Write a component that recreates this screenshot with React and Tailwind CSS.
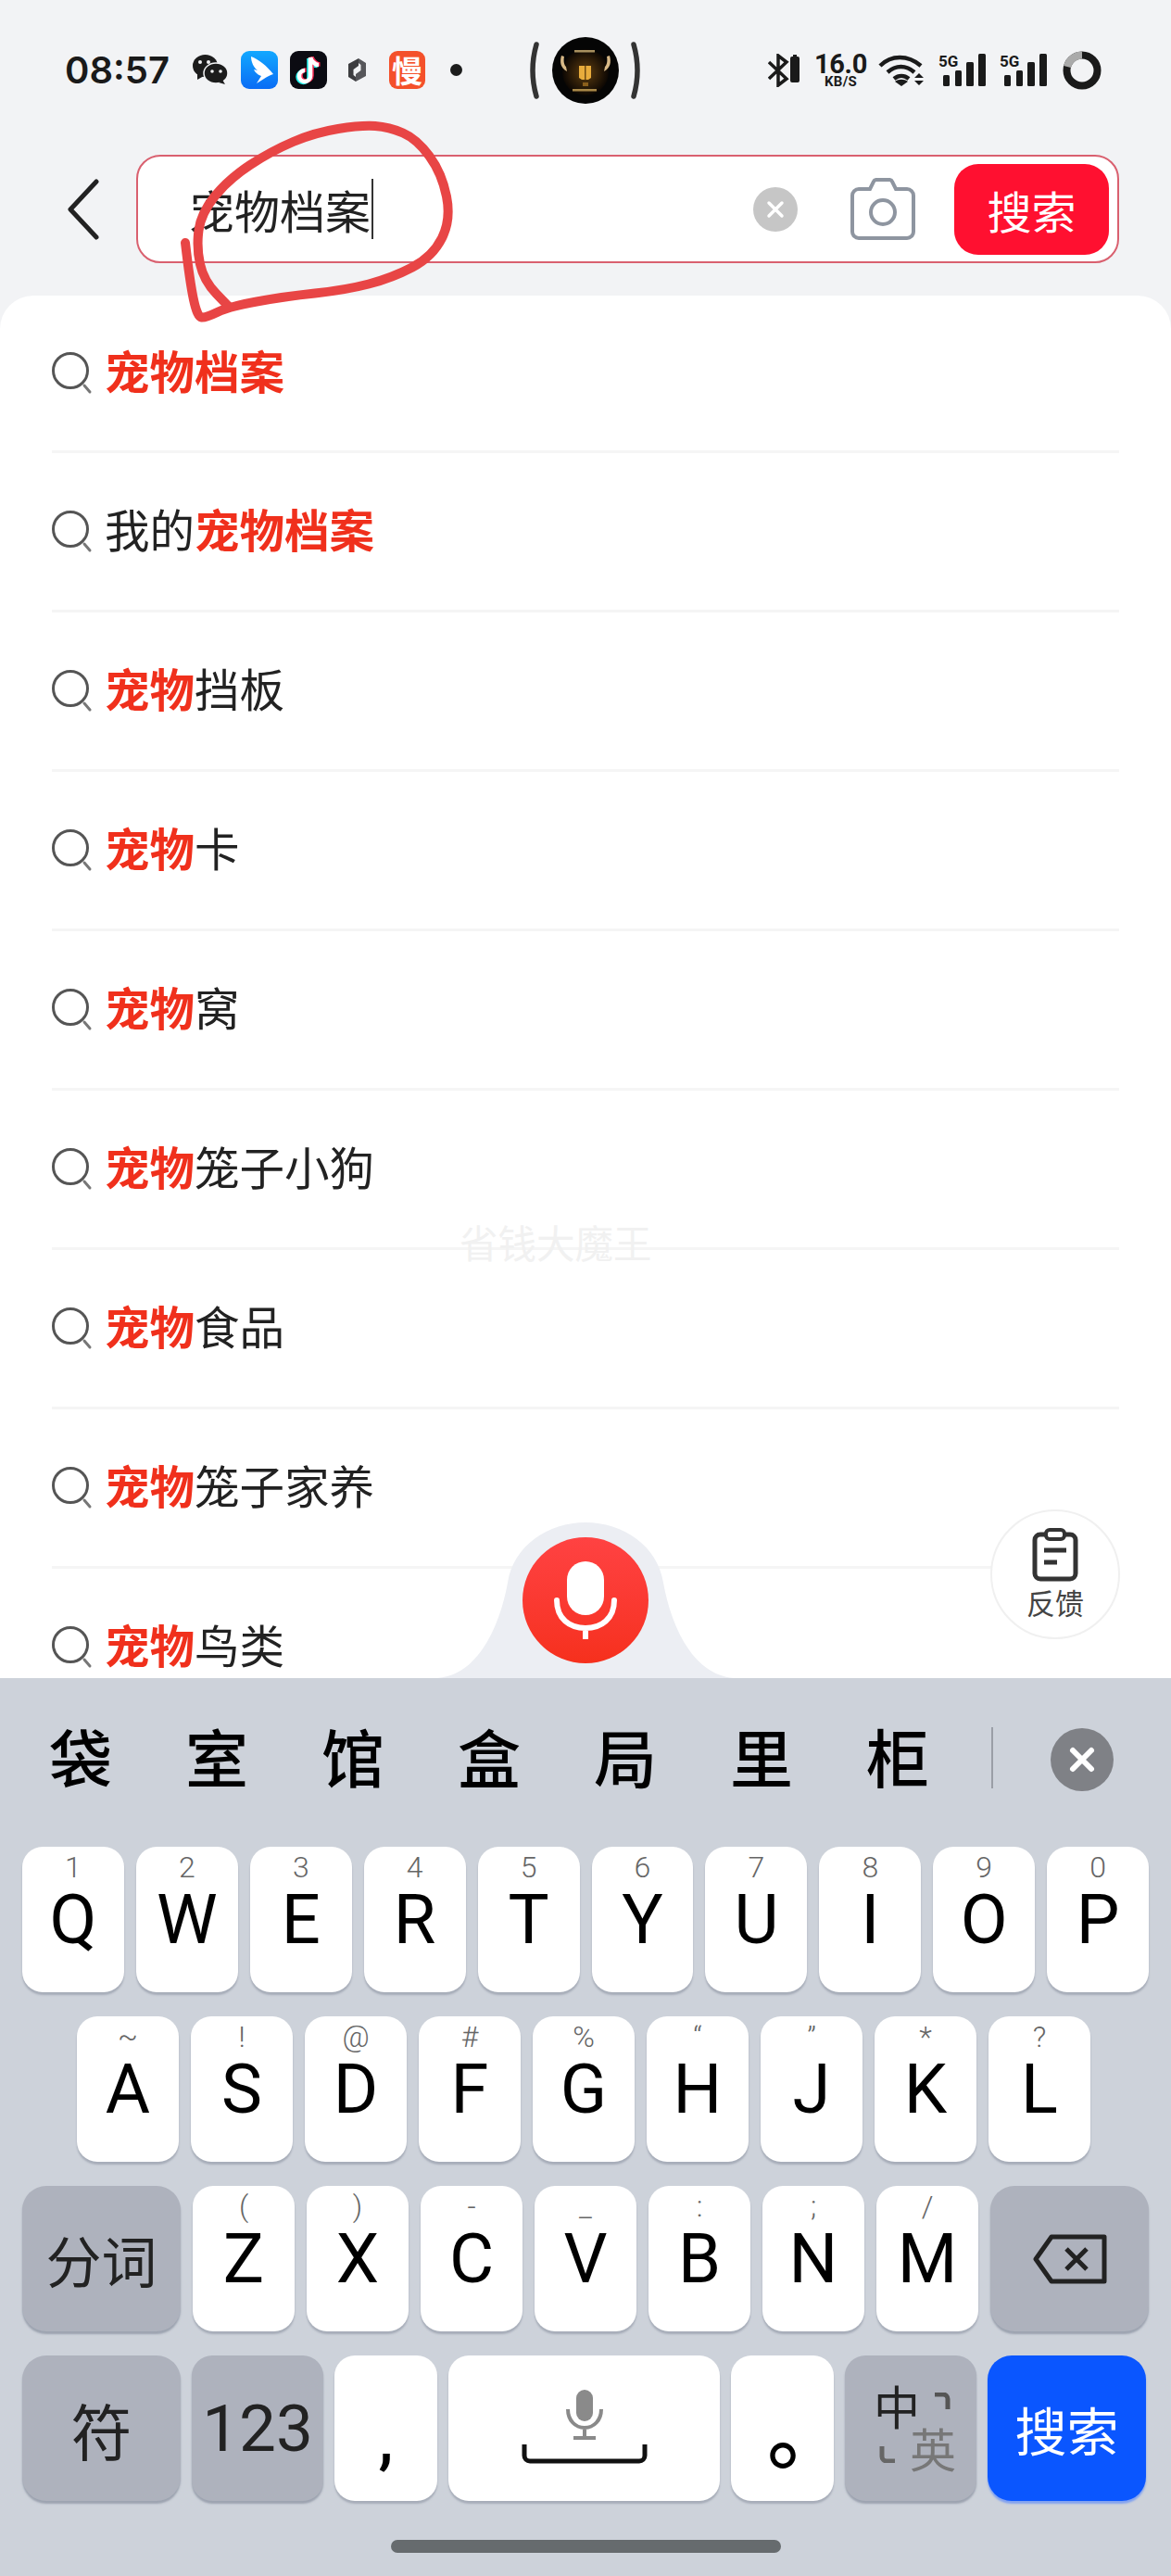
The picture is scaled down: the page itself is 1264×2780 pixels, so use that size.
import React from "react";

const rows = [
  ["宠物档案", ""],
  ["宠物档案", "我的"],
  ["宠物", "", "挡板"],
  ["宠物", "", "卡"],
  ["宠物", "", "窝"],
  ["宠物", "", "笼子小狗"],
  ["宠物", "", "食品"],
  ["宠物", "", "笼子家养"],
  ["宠物", "", "鸟类"],
];

const candidates = ["袋", "室", "馆", "盒", "局", "里", "柜"];

const row1 = [["1", "Q"], ["2", "W"], ["3", "E"], ["4", "R"], ["5", "T"], ["6", "Y"], ["7", "U"], ["8", "I"], ["9", "O"], ["0", "P"]];
const row2 = [["~", "A"], ["!", "S"], ["@", "D"], ["#", "F"], ["%", "G"], ["“", "H"], ["”", "J"], ["*", "K"], ["?", "L"]];
const row3 = [["(", "Z"], [")", "X"], ["-", "C"], ["_", "V"], [":", "B"], [";", "N"], ["/", "M"]];

// hand drawn circle, page coordinates
const scribble = [
  [200, 262], [205, 305], [213, 342], [222, 343], [247, 331], [307, 320], [373, 313], [423, 300], [467, 277],
  [487, 237], [477, 187], [450, 150], [420, 137], [390, 135], [340, 143], [293, 163], [247, 193], [217, 230],
  [212, 267], [220, 303], [247, 331],
];

function smooth(pts) {
  let d = `M${pts[0][0]} ${pts[0][1]}`;
  for (let i = 1; i < pts.length - 1; i++) {
    const mx = (pts[i][0] + pts[i + 1][0]) / 2;
    const my = (pts[i][1] + pts[i + 1][1]) / 2;
    d += ` Q${pts[i][0]} ${pts[i][1]} ${mx} ${my}`;
  }
  const last = pts[pts.length - 1];
  return d + ` L${last[0]} ${last[1]}`;
}

function SearchGlyph() {
  return (
    <svg width="44" height="46" viewBox="0 0 44 46" fill="none" className="shrink-0">
      <circle cx="20" cy="20" r="18.5" stroke="#555" strokeWidth="3" />
      <path d="M35 36l6 7" stroke="#777" strokeWidth="3" strokeLinecap="round" />
    </svg>
  );
}

function Key({ hint, letter }) {
  return (
    <div className="flex-1 h-[157px] bg-white rounded-[22px] shadow-[0_3px_2px_rgba(110,118,135,0.4)] flex flex-col items-center">
      <span className="h-[36px] mt-[6px] text-[32px] leading-[32px] font-light text-[#666]">{hint}</span>
      <span className="text-[74px] leading-[74px] text-black">{letter}</span>
    </div>
  );
}

function FixedKey({ hint, letter }) {
  return (
    <div className="w-[110px] shrink-0 h-[157px] bg-white rounded-[22px] shadow-[0_3px_2px_rgba(110,118,135,0.4)] flex flex-col items-center">
      <span className="h-[36px] mt-[6px] text-[32px] leading-[32px] font-light text-[#666]">{hint}</span>
      <span className="text-[74px] leading-[74px] text-black">{letter}</span>
    </div>
  );
}

function SignalBars() {
  return (
    <svg width="51" height="37" viewBox="0 0 51 37" className="ml-[15px]">
      <text x="0" y="15" fontFamily="Roboto, sans-serif" fontWeight="700" fontSize="17" fill="#1a1a1a">5G</text>
      <rect x="5" y="24" width="7" height="12" rx="1.5" fill="#1a1a1a" />
      <rect x="18" y="19" width="7" height="17" rx="1.5" fill="#1a1a1a" />
      <rect x="30" y="10" width="8" height="26" rx="1.5" fill="#1a1a1a" />
      <rect x="43" y="1" width="8" height="35" rx="1.5" fill="#1a1a1a" />
    </svg>
  );
}

function StatusBar() {
  return (
    <div className="h-[71px] mt-[40px] pl-[70px] flex items-center shrink-0">
      <span className="w-[108px] font-['Inter',sans-serif] font-semibold text-[40px] leading-none text-[#1a1a1a]">08:57</span>
      {/* wechat */}
      <svg width="38" height="33" viewBox="0 0 38 33" className="ml-[30px]">
        <ellipse cx="13.5" cy="12" rx="13.5" ry="12" fill="#1c1c1c" />
        <path d="M5 20l0 7 7-4z" fill="#1c1c1c" />
        <ellipse cx="25" cy="20" rx="13" ry="11" fill="#1c1c1c" stroke="#f2f3f5" strokeWidth="1.5" />
        <path d="M32 27l3 5-7-2z" fill="#1c1c1c" />
        <circle cx="8" cy="8" r="2" fill="#f2f3f5" />
        <circle cx="17" cy="8" r="2" fill="#f2f3f5" />
        <circle cx="21" cy="18" r="1.8" fill="#f2f3f5" />
        <circle cx="30" cy="18" r="1.8" fill="#f2f3f5" />
      </svg>
      {/* wing app */}
      <svg width="40" height="41" viewBox="0 0 40 41" className="ml-[14px]">
        <defs>
          <linearGradient id="wing" x1="0" y1="0" x2="0" y2="1">
            <stop offset="0" stopColor="#12a8ff" />
            <stop offset="1" stopColor="#0a6cf5" />
          </linearGradient>
        </defs>
        <rect width="40" height="41" rx="9" fill="url(#wing)" />
        <path d="M11 6c8 3 17 10 24 19-4 1-7 3-10 5l-8 5 5-8c-3-1-7-4-8-7l4 1c-4-3-7-9-7-15z" fill="#fff" />
      </svg>
      {/* tiktok */}
      <svg width="40" height="41" viewBox="0 0 40 41" className="ml-[13px]">
        <rect width="40" height="41" rx="9" fill="#0b0b12" />
        <g fill="none" strokeWidth="4.5">
          <path d="M22 7v20a6 6 0 1 1-6-6" stroke="#25f4ee" transform="translate(-1.5 1)" />
          <path d="M22 7c1 4 5 8 9 8" stroke="#25f4ee" transform="translate(-1.5 1)" />
          <path d="M22 7c1 4 5 8 9 8" stroke="#fe2c55" transform="translate(1.5 -0.5)" />
          <path d="M22 7v20a6 6 0 1 1-6-6" stroke="#fe2c55" transform="translate(1.5 -0.5)" />
          <path d="M22 7v20a6 6 0 1 1-6-6" stroke="#fff" />
          <path d="M22 7c1 4 5 8 9 8" stroke="#fff" />
        </g>
      </svg>
      {/* small hex */}
      <svg width="21" height="27" viewBox="0 0 21 27" className="ml-[22px]">
        <path d="M12 1v8L6.5 13v6L9 21v5L1 21V7z" fill="#3d3d40" />
        <path d="M9 26v-8l5.5-4V8L12 6V1l8 5v14z" fill="#56565a" />
      </svg>
      <div className="ml-[24px] w-[39px] h-[41px] rounded-[9px] bg-[#f4502a] flex items-center justify-center text-white text-[33px] leading-none font-bold">慢</div>
      <div className="ml-[27px] w-[13px] h-[13px] rounded-full bg-[#1c1c1c]" />
      {/* camera cutout */}
      <svg width="12" height="62" viewBox="0 0 12 62" className="ml-[71px]">
        <path d="M9 3Q1 31 9 59" fill="none" stroke="#333" strokeWidth="5.5" strokeLinecap="round" />
      </svg>
      <svg width="72" height="72" viewBox="0 0 72 72" className="ml-[14px]">
        <defs>
          <radialGradient id="gold" cx="0.5" cy="0.5" r="0.5">
            <stop offset="0" stopColor="#5e3e10" />
            <stop offset="0.6" stopColor="#2e1d08" />
            <stop offset="1" stopColor="#0c0703" />
          </radialGradient>
        </defs>
        <circle cx="36" cy="36" r="36" fill="#050505" />
        <circle cx="36" cy="38" r="25" fill="url(#gold)" />
        <path d="M10 20c-2 7-1 13 6 17l-1-5c-2-2-3-6-2-11zM62 20c2 7 1 13-6 17l1-5c2-2 3-6 2-11z" fill="#d8b987" />
        <path d="M29 31h13v13l-3 2h-7l-3-2z" fill="#e8ac3c" />
        <path d="M35 31h1.5v15H35z" fill="#6e4a12" />
        <path d="M24 14h22v2.5H24z" fill="#a8905f" />
        <path d="M22 56h26v2.5H22z" fill="#a88848" />
        <path d="M33 49h6v4h-6z" fill="#8a5f1c" />
      </svg>
      <svg width="12" height="62" viewBox="0 0 12 62" className="ml-[13px]">
        <path d="M3 3Q11 31 3 59" fill="none" stroke="#333" strokeWidth="5.5" strokeLinecap="round" />
      </svg>
      {/* bluetooth + battery */}
      <svg width="36" height="36" viewBox="0 0 36 36" className="ml-[136px]" fill="none">
        <path d="M1 9l19 18-9 7V2l9 7L1 27" stroke="#1a1a1a" strokeWidth="3.5" />
        <path d="M24 5a2 2 0 0 1 2-2h1V1h4v2h1a2 2 0 0 1 2 2v24a2 2 0 0 1-2 2h-6a2 2 0 0 1-2-2z" fill="#1a1a1a" />
      </svg>
      <div className="ml-[15px] w-[55px] flex flex-col items-center font-['Roboto',sans-serif] font-bold text-[#1a1a1a] -mt-[1px]">
        <span className="text-[29px] leading-[25px] tracking-[-0.3px]">16.0</span>
        <span className="text-[15px] leading-[12px] tracking-[0.3px]">KB/S</span>
      </div>
      {/* wifi */}
      <svg width="50" height="36" viewBox="0 0 50 36" fill="none" className="ml-[13px]">
        <path d="M2 13C14 1 32 1 46 13M10 20c9-8 20-8 29 0M17 27c5-4 11-4 16 0" stroke="#1a1a1a" strokeWidth="4.5" />
        <path d="M25 35l-7-5c4-3 10-3 14 0z" fill="#1a1a1a" />
        <path d="M44 21l5 5H39zM44 34l5-5H39z" fill="#1a1a1a" />
      </svg>
      <SignalBars />
      <SignalBars />
      {/* battery ring */}
      <svg width="42" height="42" viewBox="0 0 42 42" fill="none" className="ml-[17px]">
        <circle cx="21" cy="21" r="16.5" stroke="#1a1a1a" strokeWidth="8" />
        <path d="M21 4.5A16.5 16.5 0 0 0 5 17" stroke="#aaa" strokeWidth="8" />
      </svg>
    </div>
  );
}

function SearchHeader() {
  return (
    <div className="mt-[56px] h-[117px] mb-[35px] flex items-center shrink-0">
      <svg width="36" height="66" viewBox="0 0 36 66" fill="none" className="ml-[72px]">
        <path d="M32 3L4 33l28 30" stroke="#222" strokeWidth="5" strokeLinecap="round" strokeLinejoin="round" />
      </svg>
      <div className="ml-[39px] w-[1061px] h-[117px] rounded-[26px] border-2 border-[#d9606f] bg-white flex items-center pr-[9px]">
        <span className="ml-[55px] text-[49px] leading-none text-[#222]">宠物档案</span>
        <span className="ml-[1px] w-[1.5px] h-[65px] bg-[#333]" />
        <div className="ml-[410px] w-[48px] h-[48px] rounded-full bg-[#c6c6c6] flex items-center justify-center">
          <svg width="22" height="22" viewBox="0 0 22 22" fill="none">
            <path d="M4 4l14 14M18 4L4 18" stroke="#fff" strokeWidth="3.5" strokeLinecap="round" />
          </svg>
        </div>
        <svg width="70" height="68" viewBox="0 0 70 68" fill="none" className="ml-[57px]">
          <path d="M21 12l4-8a3 3 0 0 1 2.5-2h15a3 3 0 0 1 2.5 2l4 8h12a7 7 0 0 1 7 7v39a7 7 0 0 1-7 7H9a7 7 0 0 1-7-7V19a7 7 0 0 1 7-7z" stroke="#8e95a0" strokeWidth="4" />
          <circle cx="35" cy="37" r="13" stroke="#8e95a0" strokeWidth="4" />
        </svg>
        <div className="ml-auto w-[167px] h-[98px] rounded-[26px] bg-[#ff1030] flex items-center justify-center text-white text-[48px] leading-none">搜索</div>
      </div>
    </div>
  );
}

function SuggestList() {
  return (
    <div className="flex-1 min-h-0 overflow-hidden bg-white rounded-t-[36px] px-[56px]">
      {rows.map((r, i) => (
        <div key={i} className={`${i === 0 ? "h-[170px]" : "h-[172px]"} border-b-[3px] border-[#f5f5f5] flex items-center shrink-0 text-[48.5px] leading-none`}>
          <SearchGlyph />
          <div className="flex -mt-[6px]">
            <span className="ml-[13px] text-[#222]">{r[1]}</span>
            <span className="font-bold text-[#f0301c]">{r[0]}</span>
            <span className="text-[#222]">{r[2]}</span>
          </div>
        </div>
      ))}
    </div>
  );
}

function Keyboard() {
  return (
    <div className="h-[969px] shrink-0 bg-[#cdd2da] font-['Roboto','Noto_Sans_CJK_SC',sans-serif]">
      {/* candidates */}
      <div className="h-[172px] flex items-center font-['Noto_Sans_CJK_SC',sans-serif]">
        <div className="pl-[53px] flex gap-[79px] text-[68px] leading-none font-medium text-black -mt-[4px]">
          {candidates.map((c) => (
            <span key={c}>{c}</span>
          ))}
        </div>
        <div className="ml-[67px] w-[2px] h-[66px] bg-[#9a9ea6]" />
        <div className="ml-[62px] w-[68px] h-[68px] mt-[4px] rounded-full bg-[#7f8186] flex items-center justify-center">
          <svg width="30" height="30" viewBox="0 0 30 30" fill="none">
            <path d="M5 5l20 20M25 5L5 25" stroke="#fff" strokeWidth="6" strokeLinecap="round" />
          </svg>
        </div>
      </div>

      <div className="mt-[10px] px-[24px] flex flex-col gap-[26px]">
        <div className="flex gap-[13px]">
          {row1.map(([h, l]) => (
            <Key key={l} hint={h} letter={l} />
          ))}
        </div>
        <div className="flex justify-center gap-[13px] pr-[4px]">
          {row2.map(([h, l]) => (
            <FixedKey key={l} hint={h} letter={l} />
          ))}
        </div>
        <div className="flex gap-[13px]">
          <div className="w-[171px] h-[157px] bg-[#aeb2bd] rounded-[26px] shadow-[0_3px_2px_rgba(110,118,135,0.5)] flex items-center justify-center text-[60px] leading-none text-[#222] font-['Noto_Sans_CJK_SC',sans-serif]">分词</div>
          {row3.map(([h, l]) => (
            <FixedKey key={l} hint={h} letter={l} />
          ))}
          <div className="w-[171px] h-[157px] bg-[#aeb2bd] rounded-[26px] shadow-[0_3px_2px_rgba(110,118,135,0.5)] flex items-center justify-center">
            <svg width="80" height="54" viewBox="0 0 80 54" fill="none">
              <path d="M20 3h57v48H20L3 27z" stroke="#222" strokeWidth="5" strokeLinejoin="round" />
              <path d="M36 16l22 22M58 16L36 38" stroke="#222" strokeWidth="5" />
            </svg>
          </div>
        </div>
        <div className="flex gap-[12px]">
          <div className="w-[171px] h-[157px] bg-[#aeb2bd] rounded-[26px] shadow-[0_3px_2px_rgba(110,118,135,0.5)] flex items-center justify-center text-[66px] leading-none text-[#222] font-['Noto_Sans_CJK_SC',sans-serif]">符</div>
          <div className="w-[142px] h-[157px] bg-[#aeb2bd] rounded-[22px] shadow-[0_3px_2px_rgba(110,118,135,0.5)] flex items-center justify-center text-[71px] leading-none text-[#222]">123</div>
          <div className="w-[111px] h-[157px] bg-white rounded-[22px] shadow-[0_3px_2px_rgba(110,118,135,0.4)] flex justify-center pt-[54px] text-[72px] leading-[72px] font-medium text-black">,</div>
          <div className="w-[293px] h-[157px] bg-white rounded-[22px] shadow-[0_3px_2px_rgba(110,118,135,0.4)] flex flex-col items-center pt-[36px]">
            <svg width="42" height="56" viewBox="0 0 42 56" fill="none">
              <rect x="12" y="1" width="18" height="34" rx="9" fill="#8a8a8a" />
              <path d="M3 22c0 12 8 20 18 20s18-8 18-20M21 42v10M9 53h24" stroke="#8a8a8a" strokeWidth="4" />
            </svg>
            <svg width="136" height="22" viewBox="0 0 136 22" fill="none" className="mt-[3px]">
              <path d="M3 1v12a6 6 0 0 0 6 6h118a6 6 0 0 0 6-6V1" stroke="#111" strokeWidth="5" />
            </svg>
          </div>
          <div className="w-[111px] h-[157px] bg-white rounded-[22px] shadow-[0_3px_2px_rgba(110,118,135,0.4)] pl-[39px] pt-[33px] text-[88px] leading-[88px] font-medium text-black font-['Noto_Sans_CJK_SC',sans-serif]">。</div>
          <div className="relative w-[142px] h-[157px] bg-[#aeb2bd] rounded-[22px] shadow-[0_3px_2px_rgba(110,118,135,0.5)] font-['Noto_Sans_CJK_SC',sans-serif]">
            <span className="absolute left-[31px] top-[28px] text-[50px] leading-none text-[#222]">中</span>
            <span className="absolute left-[70px] top-[74px] text-[50px] leading-none text-[#777]">英</span>
            <svg width="20" height="20" viewBox="0 0 20 20" fill="none" className="absolute left-[95px] top-[40px]">
              <path d="M2 2h9a5 5 0 0 1 5 5v11" stroke="#555" strokeWidth="5" />
            </svg>
            <svg width="20" height="20" viewBox="0 0 20 20" fill="none" className="absolute left-[36px] top-[96px]">
              <path d="M4 2v11a5 5 0 0 0 5 5h9" stroke="#666" strokeWidth="5" />
            </svg>
          </div>
          <div className="w-[171px] h-[157px] bg-[#0a56ff] rounded-[26px] shadow-[0_3px_2px_rgba(80,130,255,0.6)] flex items-center justify-center text-white text-[56px] leading-none font-['Noto_Sans_CJK_SC',sans-serif]">搜索</div>
        </div>
      </div>

      <div className="mt-[42px] mx-auto w-[421px] h-[14px] rounded-full bg-[#666b6e]" />
    </div>
  );
}

export default function App() {
  return (
    <div className="relative w-[1264px] h-[2780px] overflow-hidden bg-[#f2f3f5] flex flex-col font-['Noto_Sans_CJK_SC',sans-serif]">
      <StatusBar />
      <SearchHeader />
      <SuggestList />
      <Keyboard />

      {/* red pen mark over the search box */}
      <svg width="520" height="360" viewBox="0 0 520 360" fill="none" className="absolute left-0 top-0 pointer-events-none">
        <path d={smooth(scribble)} stroke="#e84545" strokeWidth="10" strokeLinecap="round" strokeLinejoin="round" />
      </svg>

      {/* watermark */}
      <span className="absolute left-[496px] top-[1317px] text-[41.5px] leading-[46px] text-[#f1f1f1]">省钱大魔王</span>

      {/* voice button */}
      <svg width="320" height="170" viewBox="0 0 320 170" className="absolute left-[472px] top-[1642px]">
        <path d="M0 169C46 165 68 110 76 66 82 26 120 1 160 1s78 25 84 65c8 44 30 99 76 103z" fill="#eceef3" />
      </svg>
      <div className="absolute left-[564px] top-[1659px] w-[136px] h-[136px] rounded-full bg-gradient-to-b from-[#ff4242] to-[#f6301c] flex items-center justify-center">
        <svg width="68" height="84" viewBox="0 0 68 84" fill="none">
          <rect x="14" y="0" width="40" height="58" rx="20" fill="#fff" />
          <path d="M3 42c0 20 14 30 31 30s31-10 31-30M34 72v11" stroke="#fff" strokeWidth="6" strokeLinecap="round" />
        </svg>
      </div>

      {/* feedback */}
      <div className="absolute left-[1069px] top-[1629px] w-[140px] h-[140px] rounded-full bg-white border-2 border-[#f0f0f0] flex flex-col items-center pt-[18px]">
        <svg width="50" height="58" viewBox="0 0 50 58" fill="none">
          <rect x="3" y="7" width="44" height="48" rx="6" stroke="#333" strokeWidth="5" />
          <rect x="15" y="2" width="20" height="10" rx="4" fill="#fff" stroke="#333" strokeWidth="4" />
          <path d="M13 24h24M13 37h14" stroke="#333" strokeWidth="5" />
        </svg>
        <span className="mt-[4px] text-[31px] leading-[36px] text-[#444]">反馈</span>
      </div>
    </div>
  );
}
